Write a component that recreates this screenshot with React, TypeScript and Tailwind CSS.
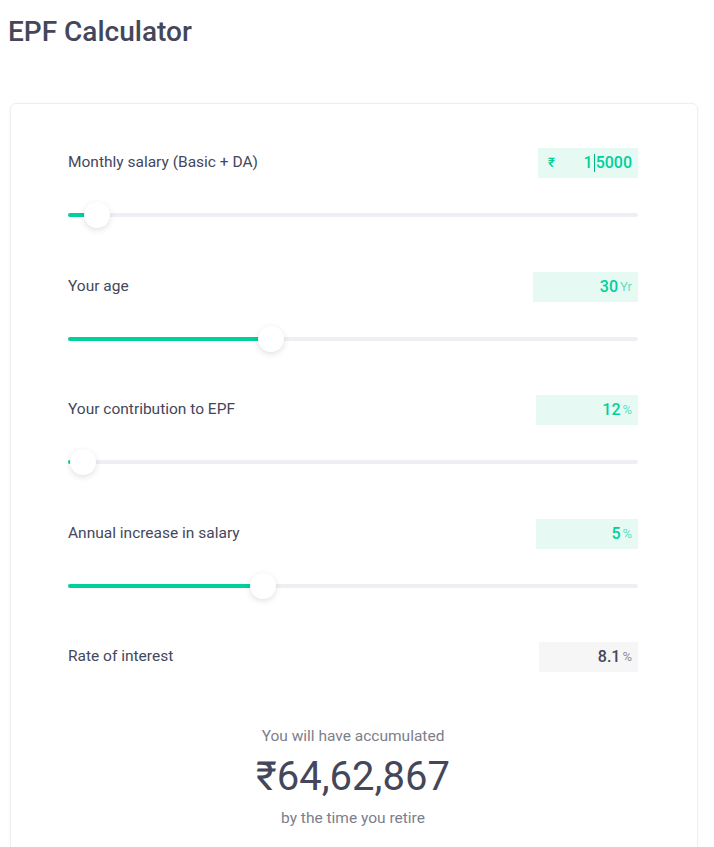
import React from 'react';

type Row = {
  label: string;
  value: string;
  unit?: string;
  prefix?: string;
  pct?: number;
  width: number;
  muted?: boolean;
};

const rows: Row[] = [
  { label: 'Monthly salary (Basic + DA)', value: '15000', prefix: '₹', pct: 3, width: 100 },
  { label: 'Your age', value: '30', unit: 'Yr', pct: 35, width: 105 },
  { label: 'Your contribution to EPF', value: '12', unit: '%', pct: 0.3, width: 102 },
  { label: 'Annual increase in salary', value: '5', unit: '%', pct: 33.5, width: 102 },
  { label: 'Rate of interest', value: '8.1', unit: '%', width: 99, muted: true },
];

function Slider({ pct }: { pct: number }) {
  // thumb travels between the two ends of the track, keeping its edge inside
  const left = `calc(${pct / 100} * (100% - 26px))`;
  return (
    <div className="relative h-[26px] mt-6 flex items-center">
      <div className="h-1 w-full rounded-full bg-[#eeeff2]" />
      <div
        className="absolute left-0 h-1 rounded-full bg-[#00d09c]"
        style={{ width: `calc(${left} + 13px)` }}
      />
      <div
        className="absolute top-0 w-[26px] h-[26px] rounded-full bg-white shadow-[0_2px_6px_rgba(0,0,0,0.12)]"
        style={{ left }}
      />
    </div>
  );
}

function ValueBox({ row }: { row: Row }) {
  const tone = row.muted ? 'bg-[#f6f6f7] text-[#44475b]' : 'bg-[#e6faf3] text-[#00d09c]';
  return (
    <div
      className={`h-[30px] flex items-center justify-between pl-2.5 pr-1.5 ${tone}`}
      style={{ width: row.width }}
    >
      <span className="text-[13px] font-medium">{row.prefix}</span>
      <span className="text-base font-medium flex items-center">
        {row.prefix ? (
          <>
            1<span className="inline-block w-px h-[18px] bg-[#00b386] mx-px" />5000
          </>
        ) : (
          row.value
        )}
        {row.unit && <span className="text-[13px] font-normal opacity-60 ml-0.5">{row.unit}</span>}
      </span>
    </div>
  );
}

export default function App() {
  return (
    <div className="min-h-screen bg-white pl-2 pr-4 pt-[15px] font-['Roboto',sans-serif] text-[#44475b]">
      <h1 className="text-[28px] leading-[34px] font-medium">EPF Calculator</h1>

      <div className="mt-[54px] ml-0.5 rounded-md border border-[#efefef] pl-[57px] pr-[59px] pt-[44px] pb-10 shadow-[0_1px_4px_rgba(0,0,0,0.03)]">
        {rows.map((row) => (
          <div key={row.label} className={row.pct !== undefined ? 'mb-[43.5px]' : ''}>
            <div className="flex items-center justify-between">
              <span className="text-[15.5px]">{row.label}</span>
              <ValueBox row={row} />
            </div>
            {row.pct !== undefined && <Slider pct={row.pct} />}
          </div>
        ))}

        <div className="mt-[54px] flex flex-col items-center">
          <span className="text-[15.5px] leading-5 text-[#7c7e8c]">You will have accumulated</span>
          <span className="text-[40px] leading-[46px] mt-2 text-[#44475b]">₹64,62,867</span>
          <span className="text-[15.5px] leading-5 mt-2 text-[#7c7e8c]">by the time you retire</span>
        </div>
      </div>
    </div>
  );
}
